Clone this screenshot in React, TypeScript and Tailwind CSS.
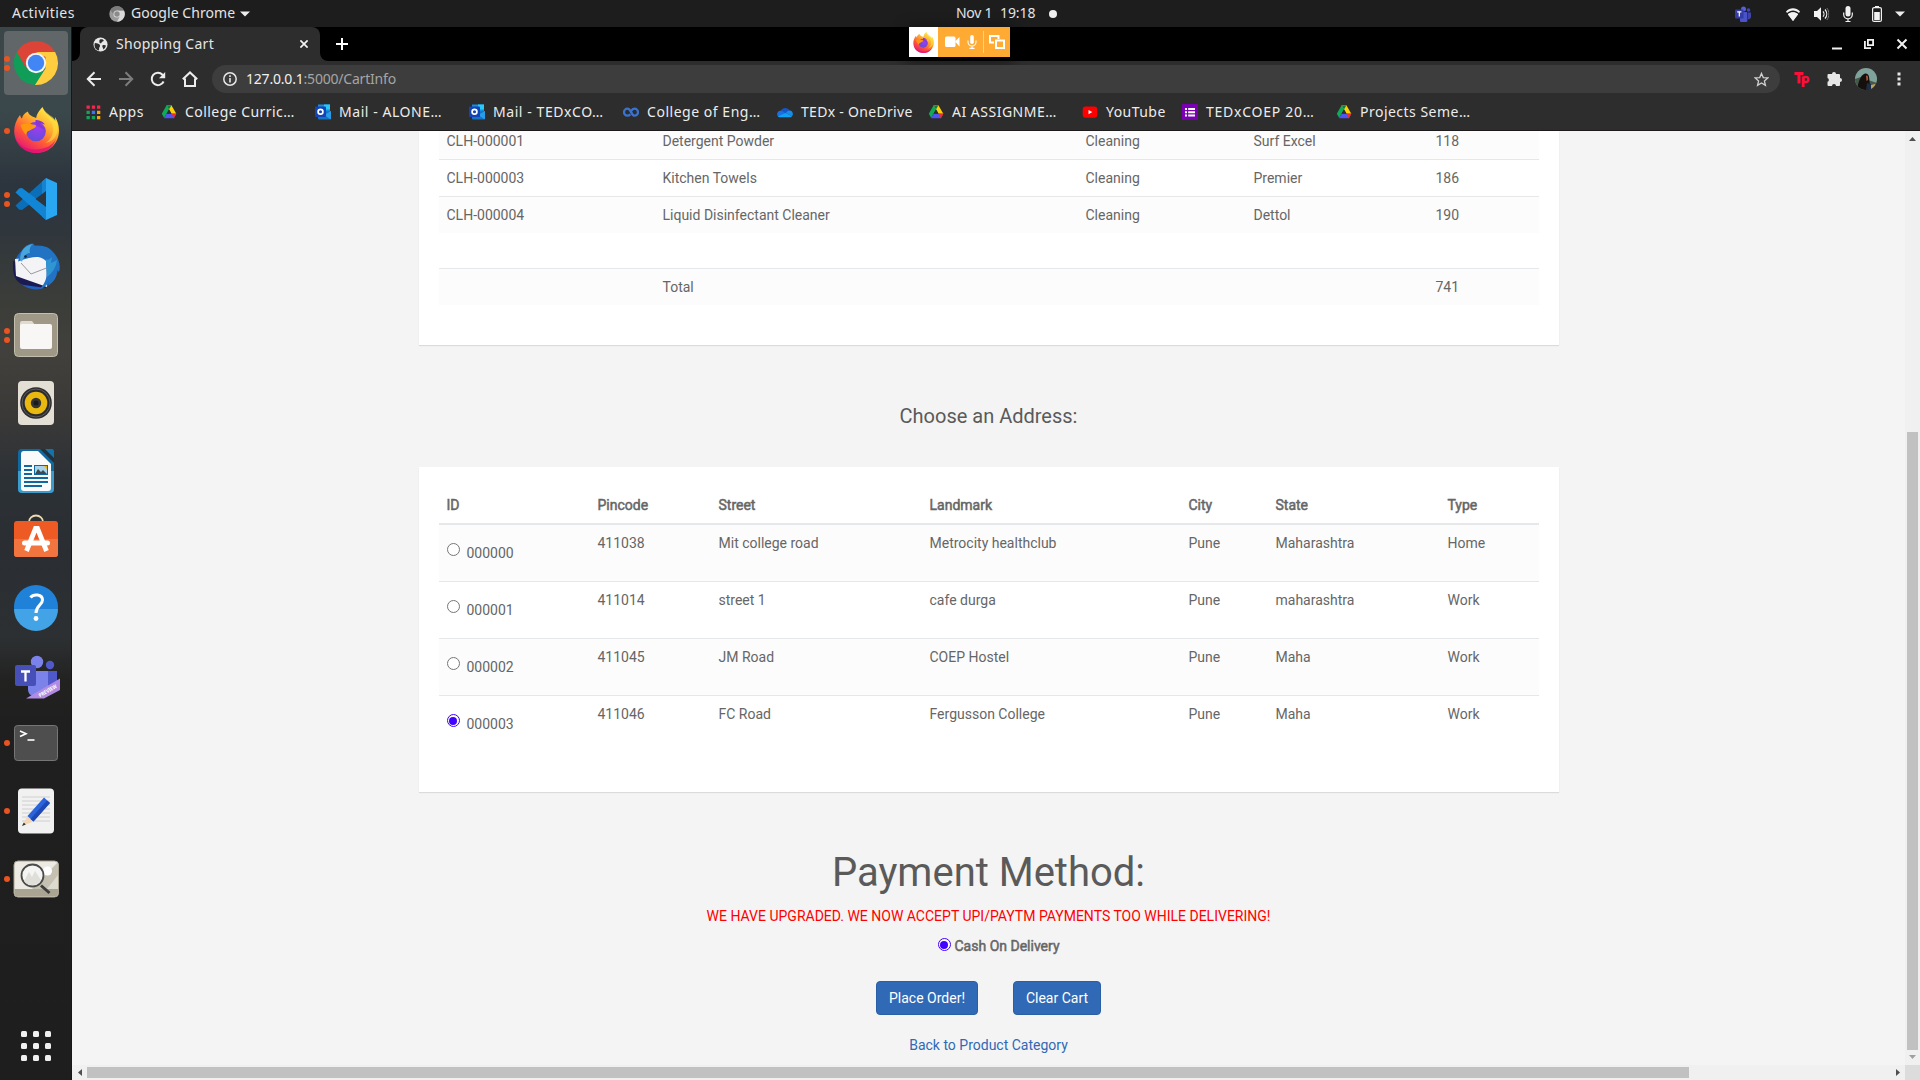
import React from "react";

type Kids = { children?: React.ReactNode };

/* ---------- small shared drawings ---------- */

function Firefox({ id, className }: { id: string; className: string }) {
  return (
    <svg viewBox="0 0 46 46" className={className}>
      <defs>
        <linearGradient id={id + "b"} x1="0.85" y1="0.05" x2="0.25" y2="1">
          <stop offset="0" stopColor="#fff44f" />
          <stop offset="0.35" stopColor="#ffb02e" />
          <stop offset="0.65" stopColor="#ff5a36" />
          <stop offset="1" stopColor="#e3127a" />
        </linearGradient>
        <radialGradient id={id + "p"} cx="0.6" cy="0.3" r="0.8">
          <stop offset="0" stopColor="#a03cf0" />
          <stop offset="1" stopColor="#5a4fd8" />
        </radialGradient>
      </defs>
      <path
        d="M29 0c-3 3-6 7-6.400 11C18 9 15 8 14.500 4.500 11 6 9 8.500 8.500 11.500 7.500 11 7 9.500 6.500 8 3 12.500.7 18 .7 24 .7 36.500 10.500 46 23 46s22.500-9.500 22.500-22.500c0-5-1.500-10-4-13.500l.3 4C37.500 9 31 7 29 0z"
        fill={`url(#${id}b)`}
      />
      <circle cx="22.500" cy="24.500" r="9.800" fill={`url(#${id}p)`} />
      <path d="M22 13c3 0 7 1 9.500 4.500-2-1-4-1-5-.5 3 2 5 4 5.500 8C30 20 24 21 22 17z" fill="#8a36d6" />
      <path d="M7 18c5-2 9-1 15 0 1 1 .5 2.500-2 3.500-3 1-3 2-5 2.500-1 .3-2 1-2.400 4C10 25 8 22 7 18z" fill="#ff980e" />
      <path d="M29 0c-2 7 8 10 10 18 2 9-2 15-7 18 10-2 13-10 12-18-1-4-3-6-5-8-4-3-8-5-10-10z" fill="#ffe13d" opacity=".6" />
      <path d="M1.500 29c3 9 11 13.500 20 13.500 10 0 18-4 21-11C40 41 32 46 23 46 12 46 4 39 1.500 29z" fill="#e20d78" opacity=".75" />
    </svg>
  );
}

function Drive() {
  return (
    <svg viewBox="0 0 16 16" className="size-4 shrink-0">
      <path d="M5.600 1.300h4.800L5.500 9.800 3.200 14 .8 9.800z" fill="#0fa958" />
      <path d="M5.600 1.300h4.800l4.900 8.500h-4.700z" fill="#ffcf0a" />
      <path d="M5.600 1.300L8 5.500l2.400-4.200z" fill="#0b8043" />
      <path d="M5.500 9.800h9.800l-2.400 4.400H3.100z" fill="#4f55f2" />
      <path d="M10.600 9.800h4.700l-2.400 4.400z" fill="#e8302c" />
      <path d="M5.700 9.500L8 5.500l2.300 4z" fill="#2d2d2d" />
    </svg>
  );
}

function Outlook() {
  return (
    <svg viewBox="0 0 16 16" className="size-4 shrink-0">
      <path d="M3 .5h12v9H3z" fill="#1490df" />
      <path d="M9 .5h6v5H9z" fill="#28c8f8" />
      <path d="M3 8l13-1v7.500a1 1 0 0 1-1 1H4a1 1 0 0 1-1-1z" fill="#1272c4" />
      <path d="M16 7v7.500a1 1 0 0 1-.5.800L9 11z" fill="#2a9be6" />
      <rect y="2.500" width="11" height="10.500" rx="1" fill="#1443b8" />
      <circle cx="5.500" cy="7.800" r="2.400" fill="none" stroke="#fff" strokeWidth="1.700" />
    </svg>
  );
}

function Coursera() {
  return (
    <svg viewBox="0 0 16 16" className="size-4 shrink-0">
      <path
        d="M7.300 10.200C6.500 11.300 5.600 11.700 4.500 11.700a3.500 3.500 0 0 1 0-7c3.600 0 3.800 7 7 7a3.500 3.500 0 0 0 0-7c-1.600 0-2.600 1-3.300 2.400"
        fill="none"
        stroke="#3a72cf"
        strokeWidth="2.300"
      />
    </svg>
  );
}

function OneDrive() {
  return (
    <svg viewBox="0 0 16 16" className="size-4 shrink-0">
      <path d="M3.500 8a5 5 0 0 1 9.300-1.500C11 8 9 9 6 10z" fill="#1556c4" />
      <path d="M3.300 6.800C1.500 7 .1 8.400.1 10.200c0 1.900 1.500 3 3.200 3L10 10 5.500 7.200c-.7-.4-1.500-.5-2.200-.4z" fill="#1b6fe0" />
      <path d="M12.700 6.500c1.900.2 3.200 1.600 3.200 3.400 0 1-.4 1.800-.9 2.400L8.800 9c1-1.600 2.400-2.600 3.900-2.500z" fill="#1a8be8" />
      <path d="M8.800 9l6.300 3.300c-.6.600-1.400.9-2.400.9H3.300c-1 0-1.900-.4-2.400-1z" fill="#0fa2f4" />
    </svg>
  );
}

function YouTube() {
  return (
    <svg viewBox="0 0 16 16" className="size-4 shrink-0">
      <rect x=".7" y="2.400" width="14.600" height="11.400" rx="3" fill="#f00" />
      <path d="M6.500 6v4.200L10.300 8.100z" fill="#fff" />
    </svg>
  );
}

function Forms() {
  return (
    <svg viewBox="0 0 16 16" className="size-4 shrink-0">
      <rect width="16" height="16" rx="1" fill="#7b00b4" />
      <path d="M3 4h2v2H3zM3 7.300h2v2H3zM3 10.600h2v2H3zM6.200 4H13v2H6.200zM6.200 7.300H13v2H6.200zM6.200 10.600H13v2H6.200z" fill="#fff" />
    </svg>
  );
}

function AppsGrid() {
  return (
    <svg viewBox="0 0 16 16" className="size-4 shrink-0">
      <path d="M1.500 1.500h3.300v3.300H1.500zM6.800 1.500h3.300v3.300H6.800zM12 1.500h3.300v3.300H12z" fill="#f5274f" />
      <path d="M1.500 6.700h3.300V10H1.500zM1.500 12h3.300v3.300H1.500zM6.800 12h3.300v3.300H6.800z" fill="#12a45c" />
      <path d="M6.800 6.700h3.300V10H6.800z" fill="#3f72f5" />
      <path d="M12 6.700h3.300V10H12zM12 12h3.300v3.300H12z" fill="#f4a60b" />
    </svg>
  );
}

/* ---------- desktop top bar ---------- */

function TopBar() {
  return (
    <header className="flex h-[27px] shrink-0 items-center bg-[#1d1d1d] text-[14px] text-[#e4e4e4]">
      <div className="flex w-[956px] items-center pl-3">
        <span className="w-[97px] pb-[2px] tracking-[0.450px]">Activities</span>
        <svg viewBox="0 0 16 16" className="mr-[6px] size-4">
          <circle cx="8" cy="8" r="7.700" fill="#9b9b9b" />
          <path d="M8 4.500h7a7.700 7.700 0 0 1-7 11.200l3.200-6z" fill="#d9d9d9" />
          <path d="M1.500 4A7.700 7.700 0 0 1 15 4.500H8L5 9.500z" fill="#7c7c7c" />
          <circle cx="8" cy="8" r="3.600" fill="#dedede" />
          <circle cx="8" cy="8" r="2.700" fill="#8b8b8b" />
        </svg>
        <span className="w-[109px] pb-[2px] tracking-[0.060px]">Google Chrome</span>
        <svg viewBox="0 0 10 6" className="h-[6px] w-[10px]">
          <path d="M0 .5h10L5 5.500z" fill="#eee" />
        </svg>
      </div>
      <div className="flex w-[779px] items-center">
        <span className="w-[44px] pb-[2px] tracking-[-0.300px]">Nov 1</span>
        <span className="w-[49px] pb-[2px] tracking-[-0.100px]">19:18</span>
        <span className="size-2 rounded-full bg-[#efefef]" />
      </div>
      <svg viewBox="0 0 16 16" className="mr-[34px] size-4">
        <circle cx="8.500" cy="3" r="2.500" fill="#5560d8" />
        <circle cx="13.500" cy="4" r="1.800" fill="#4049b8" />
        <path d="M5 6h7v6a3.500 3.500 0 0 1-7 3z" fill="#4b53c8" />
        <path d="M12.500 6.500H16V11a2.500 2.500 0 0 1-3.500 2z" fill="#3d45ad" />
        <rect y="3.500" width="8.500" height="9" rx="1" fill="#343ca6" />
        <path d="M2.200 5.800h4.200M4.300 5.800v4.700" stroke="#fff" strokeWidth="1.200" />
      </svg>
      <svg viewBox="0 0 16 16" className="mr-3 size-4">
        <path d="M8 15L2.900 8.200c3-2.600 7.200-2.600 10.200 0z" fill="#f2f2f2" />
        <path d="M2 7L1 5.500C5 1.300 11 1.300 15 5.500L14 7C10.500 3.600 5.500 3.600 2 7z" fill="#f2f2f2" />
        <path d="M2.900 8.200C5 6 11 6 13.100 8.200L8 15z" fill="#f2f2f2" />
      </svg>
      <svg viewBox="0 0 16 16" className="mr-[11px] size-4">
        <path d="M1 5h3l4-3.800v13.600L4 11H1z" fill="#f2f2f2" />
        <path d="M10 5.300c1.300 1.500 1.300 4 0 5.400M12 3.500c2.300 2.600 2.300 6.400 0 9" fill="none" stroke="#f2f2f2" strokeWidth="1.200" />
        <path d="M13.800 2c2.800 3.500 2.800 8.500 0 12" fill="none" stroke="#777" strokeWidth="1" />
      </svg>
      <svg viewBox="0 0 16 16" className="mr-[13px] size-4">
        <rect x="5.500" y="0" width="5" height="10.500" rx="2.500" fill="#f2f2f2" />
        <path d="M3.700 6.500v2a4.300 4.300 0 0 0 8.600 0v-2M8 12.500V16M5.500 15.500h5" fill="none" stroke="#f2f2f2" strokeWidth="1.200" />
      </svg>
      <svg viewBox="0 0 16 16" className="mr-[10px] size-4">
        <path d="M6 0h4v2H6z" fill="#f2f2f2" />
        <rect x="3.600" y="1.600" width="8.800" height="13.800" rx="1.500" fill="none" stroke="#f2f2f2" strokeWidth="1.200" />
        <rect x="5.200" y="6" width="5.600" height="8" fill="#f2f2f2" />
      </svg>
      <svg viewBox="0 0 10 6" className="h-[6px] w-[10px]">
        <path d="M0 .5h10L5 5.500z" fill="#eee" />
      </svg>
    </header>
  );
}

/* ---------- dock ---------- */

function DockItem({ dots = 0, active = false, children }: Kids & { dots?: number; active?: boolean }) {
  return (
    <div className="flex h-[68px] w-[72px] shrink-0 items-center justify-center">
      <div className={active ? "relative size-16 rounded-[4px] bg-[#616769]" : "relative size-16"}>
        {dots > 0 && (
          <div className="absolute inset-y-0 left-0 flex w-[6px] flex-col items-center justify-center gap-[3px]">
            {Array.from({ length: dots }, (_, i) => (
              <span key={i} className="size-[6px] rounded-full bg-[#e95420]" />
            ))}
          </div>
        )}
        <svg viewBox="0 0 64 64" className="block size-16">
          {children}
        </svg>
      </div>
    </div>
  );
}

function Dock() {
  return (
    <nav className="flex w-[72px] shrink-0 flex-col border-r border-[#161718] bg-[linear-gradient(180deg,#3a4648_0%,#3b484b_8%,#2c343d_15%,#2f363c_19%,#3b3d39_26%,#41403c_31%,#3c3a38_36%,#2c3136_43%,#2a2e33_50%,#2d3032_58%,#222221_62%,#1f1f1f_66%,#1e1e1e_100%)] pt-[2px]">
      <DockItem dots={2} active>
        <path d="M32 32L12.900 21A22 22 0 0 1 51.100 21z" fill="#db4437" />
        <path d="M12.900 21A22 22 0 0 0 32 54l9.500-16.500H32L22.500 37.500z" fill="#0f9d58" />
        <path d="M51.100 21A22 22 0 0 1 31 54l10.500-16.500V26L32 21z" fill="#ffcd40" />
        <path d="M12.900 21L22 37l5-10 5-6z" fill="#db4437" />
        <circle cx="32" cy="32" r="10.200" fill="#f4f4f4" />
        <circle cx="32" cy="32" r="8.200" fill="#4285f4" />
      </DockItem>
      <DockItem dots={1}>
        <svg x="9.500" y="8" width="46" height="46">
          <Firefox id="dock" className="size-[46px]" />
        </svg>
      </DockItem>
      <DockItem dots={2}>
        <path d="M42 11L11.500 38.500l3.500 4 3 .5L42 25z" fill="#0a6fb8" />
        <path d="M42 53L11.500 25.500l3.500-4 3-.5L42 39z" fill="#1286d6" />
        <path d="M42 11l11 5v32l-11 5z" fill="#2aa7f2" />
        <path d="M38 14.600L42 11v14l-4 3zM38 49.400L42 53V39l-4-3z" fill="#1583d0" />
        <path d="M42 24L31.500 32 42 40z" fill="#2e353c" />
      </DockItem>
      <DockItem>
        <circle cx="32" cy="32.500" r="22" fill="#2260bd" />
        <path d="M9 26C9 34 8 46 20 50l22 3-4-20z" fill="#1c1a52" />
        <path d="M11 24l31-3 1 31-31-11z" fill="#f4f4f6" />
        <path d="M17 28l10 11 18-7" fill="none" stroke="#9a9aa0" strokeWidth="1" />
        <path d="M14 27C16 14 22 9 29 8.500l2 2.500c9-1 14 1 18 6 6 6 8 14 6 20l-2-2c0 8-4 12-8 15l0-3c-3 4-6 6-9 7 8-9 8-18 6-28-5-5-12-5-17-3-4 1-7 2-11 3.500z" fill="#2273c4" />
        <path d="M16 24C17 14 22 10 29 9c-3 2-4 6-3 9-4 0-7 4-8 9z" fill="#48a6dc" />
        <path d="M42 24c2 2 4 0 6-2l-1 6 6-3c-1 8-5 13-10 17z" fill="#2f96d3" />
        <circle cx="21.500" cy="21.500" r="1.300" fill="#16233c" />
      </DockItem>
      <DockItem dots={2}>
        <rect x="10.500" y="10.500" width="43" height="43" rx="4" fill="#9f9886" stroke="#c4beae" />
        <path d="M16 20a2 2 0 0 1 2-2h10l3 4-15 10z" fill="#dfdbd2" />
        <path d="M16 23a2 2 0 0 1 2-2h9.500l3.500 0H46a2 2 0 0 1 2 2v21a2 2 0 0 1-2 2H18a2 2 0 0 1-2-2z" fill="#f8f7f6" />
      </DockItem>
      <DockItem>
        <rect x="14" y="10" width="36" height="44" rx="4" fill="#e4dfd5" />
        <circle cx="32" cy="32" r="15.800" fill="#2c2c2f" />
        <circle cx="32" cy="32" r="14" fill="none" stroke="#5d5d60" strokeWidth="1" />
        <circle cx="32" cy="32" r="11.300" fill="#eab90f" />
        <circle cx="32" cy="32" r="5.200" fill="#333" />
        <circle cx="32" cy="32" r="2.500" fill="#1a1a1a" />
      </DockItem>
      <DockItem>
        <rect x="14" y="10" width="36" height="44" rx="4" fill="#12699f" />
        <path d="M14 32h36v18a4 4 0 0 1-4 4H18a4 4 0 0 1-4-4z" fill="#3d9ccc" />
        <path d="M17 15a3 3 0 0 1 3-3h14l13 13v24a3 3 0 0 1-3 3H20a3 3 0 0 1-3-3z" fill="#fafafa" />
        <path d="M36 10l14 14V12a2 2 0 0 0-2-2z" fill="#20313d" />
        <path d="M41 10h7a2 2 0 0 1 2 2v7z" fill="#1273ad" />
        <path d="M20 27h8M20 31h8M20 35h8M20 39h24M20 43h24M20 47h18" stroke="#0f689f" strokeWidth="2" />
        <rect x="30.500" y="26.500" width="13" height="9" fill="#a8d3ea" stroke="#0f689f" />
        <path d="M31 35l3-5 3 3 2-2 4 4z" fill="#3f4a50" />
        <path d="M40 27h3v3z" fill="#f0b400" />
      </DockItem>
      <DockItem>
        <path d="M25 16v-1a7 6.500 0 0 1 14 0v1" fill="none" stroke="#ecdcae" strokeWidth="1.800" />
        <rect x="10" y="14" width="44" height="36" rx="3" fill="#ee5a24" />
        <path d="M10 32h44v15a3 3 0 0 1-3 3H13a3 3 0 0 1-3-3z" fill="#f2743f" />
        <path d="M22.500 44L31.500 21.500h2L42.500 44" fill="none" stroke="#fff" strokeWidth="4.800" />
        <rect x="18" y="33.500" width="28" height="5" rx="2.500" fill="#fff" />
      </DockItem>
      <DockItem>
        <circle cx="32" cy="32" r="22" fill="#1f82d8" />
        <path d="M10 34a22 22 0 0 0 44 0z" fill="#42a4e6" />
        <path d="M26.500 22.500c3-4 12-3.500 12 2.500 0 5-6.500 5.500-6.500 13" fill="none" stroke="#fff" strokeWidth="3" />
        <circle cx="32" cy="43.500" r="2.400" fill="#fff" />
      </DockItem>
      <DockItem>
        <circle cx="33" cy="19" r="6.200" fill="#7b83eb" />
        <circle cx="46" cy="22" r="4.200" fill="#5059c9" />
        <path d="M39 28h14v14c0 6-7 9-12 7z" fill="#5059c9" />
        <path d="M24 28h20v16c0 6-6 11-12 10s-8-4-8-8z" fill="#7b83eb" />
        <rect x="11" y="22" width="21" height="21" rx="2" fill="#4650b8" />
        <path d="M17 28.500h9M21.500 28.500v10" stroke="#fff" strokeWidth="2.300" />
        <path d="M22 55.500L56 35.500V47L40 55.500z" fill="#b18be3" />
        <text x="36" y="54.500" textLength="20" lengthAdjust="spacingAndGlyphs" transform="rotate(-30 36 54.500)" className="fill-white text-[5.500px] font-bold">
          PREVIEW
        </text>
      </DockItem>
      <DockItem dots={1}>
        <rect x="10.500" y="14.500" width="43" height="35" rx="3" fill="#4e4e4e" stroke="#767676" />
        <path d="M16 20l6 2.700-6 2.700" fill="none" stroke="#fff" strokeWidth="1.600" />
        <path d="M23.500 29h7" stroke="#fff" strokeWidth="1.600" />
      </DockItem>
      <DockItem dots={1}>
        <rect x="14" y="9.500" width="36" height="45" rx="4" fill="#f1f1f1" />
        <path d="M18 18h28M18 22h28M18 26h28M18 30h28M18 34h28M18 38h28M18 42h28" stroke="#cfcfcf" strokeWidth="1" />
        <path d="M18 47l5.500-10 6 5.500z" fill="#f3d7b5" />
        <path d="M18 47l1.800-3.500 2 2z" fill="#333" />
        <path d="M23.500 37L40 18.500l6 5.500L29.500 42.500z" fill="#2b63dc" />
        <path d="M26.500 40L43 21.500l3 2.500-16.500 18.500z" fill="#1e49b4" />
      </DockItem>
      <DockItem dots={1}>
        <rect x="10" y="14" width="44.500" height="36" rx="4" fill="#eceae2" stroke="#a7a390" />
        <path d="M54 15v27H28z" fill="#c5c1b2" />
        <path d="M54 28v14H43z" fill="#dddace" />
        <path d="M10.500 42h43.500v4a3.500 3.500 0 0 1-3.500 3.500H14a3.500 3.500 0 0 1-3.500-3.500z" fill="#aaa593" />
        <circle cx="43.500" cy="24" r="4.500" fill="#fff" />
        <circle cx="28.500" cy="28.500" r="11" fill="#f4f4f2" stroke="#4b4b4b" strokeWidth="1.800" />
        <path d="M20 34l5-9 3 5 3-6 6 9c-3 6-13 7-17 1z" fill="#dfded9" />
        <path d="M37 38.500l8.500 7.500" stroke="#3d3d3d" strokeWidth="3" />
      </DockItem>
      <div className="mx-auto mt-auto mb-[19px] grid grid-cols-3 gap-[6px]">
        {Array.from({ length: 9 }, (_, i) => (
          <span key={i} className="size-[6px] rounded-[1.500px] bg-[#f0f0f0]" />
        ))}
      </div>
    </nav>
  );
}

/* ---------- browser chrome ---------- */

function TabStrip() {
  return (
    <div className="flex h-[34px] shrink-0 items-start bg-black">
      <div className="h-[34px] w-2 bg-[#2d2d2d]">
        <div className="h-full w-2 rounded-br-[8px] bg-black" />
      </div>
      <div className="flex h-[34px] w-[240px] items-center rounded-t-[8px] bg-[#2d2d2d] pl-[13px] text-[14px] text-[#e6e6e6]">
        <svg viewBox="0 0 16 16" className="mr-[8px] size-[15px]">
          <circle cx="8" cy="8" r="7.500" fill="#e8e8e8" />
          <path d="M2 6.500C5 7 7 7 7.500 9c.3 1.500-1 1.500-1 3 0 1 .3 1.700-.5 2.500C2 13.500 1 9.500 2 6.500zM8 2.500c2-.5 3 .3 3.500 1.200C11 5 9.500 4.500 9 6c-.5 1.200-2.200.6-2.200-.7C6.800 4.200 6.500 3 8 2.500zM10 9c1.500-1 3-.5 3.800 0-.3 2-1.500 3.500-2.800 4.200C11 11.500 9.500 10.500 10 9z" fill="#2d2d2d" />
        </svg>
        <span className="w-[184px] pb-[2px] tracking-[0.300px]">Shopping Cart</span>
        <svg viewBox="0 0 8 8" className="size-2">
          <path d="M.4.4l7.200 7.200M7.600.4L.4 7.600" stroke="#f2f2f2" strokeWidth="1.700" />
        </svg>
      </div>
      <div className="h-[34px] w-2 bg-[#2d2d2d]">
        <div className="h-full w-2 rounded-bl-[8px] bg-black" />
      </div>
      <svg viewBox="0 0 12 12" className="mt-[11px] ml-2 size-3">
        <path d="M6 0v12M0 6h12" stroke="#fff" strokeWidth="2" />
      </svg>
      <div className="ml-[561px] flex h-[30px] w-[101px] shadow-[0_4px_14px_4px_rgba(0,0,0,0.35)]">
        <div className="flex w-[29px] items-center justify-center bg-white">
          <Firefox id="share" className="size-[21px]" />
        </div>
        <div className="flex flex-1 items-center bg-[#ffaa33] pl-[7px]">
          <svg viewBox="0 0 15 12" className="h-3 w-[15px]">
            <rect y=".5" width="10.500" height="10.500" rx="1.500" fill="#fff" />
            <path d="M10 5.500L14.500 1v9.500z" fill="#fff" />
          </svg>
          <svg viewBox="0 0 10 14" className="ml-[7px] h-[14px] w-[10px]">
            <rect x="3.200" width="3.600" height="9" rx="1.800" fill="#fff" />
            <path d="M1 5.500v1.500a4 4 0 0 0 8 0V5.500M5 11v2.500M2.500 13.400h5" fill="none" stroke="#fff" strokeWidth="1.100" />
          </svg>
          <div className="mr-[5px] ml-[6px] h-[22px] w-px bg-[#ffd08c]" />
          <svg viewBox="0 0 16 14" className="h-[14px] w-4">
            <path d="M5 7.500H1V1h8.500v3" fill="none" stroke="#fff" strokeWidth="2" />
            <path d="M7 5.500h8V13H7z" fill="none" stroke="#fff" strokeWidth="2" />
          </svg>
        </div>
      </div>
      <div className="mt-[11px] mr-3 ml-auto flex items-center">
        <svg viewBox="0 0 12 12" className="mr-5 size-3">
          <path d="M1 9.500h10v2H1z" fill="#f0f0f0" />
        </svg>
        <svg viewBox="0 0 12 12" className="mr-[21px] size-3">
          <path d="M4.900 1.900h5.200v5.200H4.900zM1.900 3v7.100H8" fill="none" stroke="#f0f0f0" strokeWidth="1.800" />
        </svg>
        <svg viewBox="0 0 12 12" className="size-3">
          <path d="M1.500 1.500l9 9M10.500 1.500l-9 9" stroke="#f0f0f0" strokeWidth="2" />
        </svg>
      </div>
    </div>
  );
}

function Toolbar() {
  return (
    <div className="flex h-[36px] shrink-0 items-center pl-[14px]">
      <svg viewBox="0 0 16 16" className="mr-4 size-4" fill="none" stroke="#ececec" strokeWidth="2">
        <path d="M15 8H2M8.500 1.300L1.800 8l6.700 6.700" />
      </svg>
      <svg viewBox="0 0 16 16" className="mr-4 size-4" fill="none" stroke="#7d7d7d" strokeWidth="2">
        <path d="M1 8h13M7.500 1.300L14.200 8l-6.700 6.700" />
      </svg>
      <svg viewBox="0 0 16 16" className="mr-4 size-4" fill="none" stroke="#ececec" strokeWidth="2">
        <path d="M13.600 10.500A6.200 6.200 0 1 1 12.500 3.700L14 5.200" />
        <path d="M15.200 1v6.300H9z" fill="#ececec" stroke="none" />
      </svg>
      <svg viewBox="0 0 16 16" className="mr-[14px] size-4" fill="none" stroke="#ececec" strokeWidth="2">
        <path d="M.8 8.300L8 1.500l7.200 6.800M3 7.500V15h10V7.500" />
      </svg>
      <div className="flex h-7 w-[1568px] items-center rounded-full bg-[#3d3d3d] pr-[11px] pl-[11px] text-[14px]">
        <svg viewBox="0 0 14 14" className="mr-[9px] size-[14px]">
          <circle cx="7" cy="7" r="6.200" fill="none" stroke="#e6e6e6" strokeWidth="1.500" />
          <path d="M6.200 6h1.600v4.500H6.200zM6.200 3.300h1.600v1.600H6.200z" fill="#e6e6e6" />
        </svg>
        <span className="pb-[2px] tracking-[-0.200px] text-[#f0f0f0]">127.0.0.1</span>
        <span className="pb-[2px] tracking-[-0.200px] text-[#a5a5a5]">:5000/CartInfo</span>
        <svg viewBox="0 0 16 16" className="ml-auto size-[15px]" fill="none" stroke="#d0d0d0" strokeWidth="1.400">
          <path d="M8 1.500l1.900 4.400 4.800.4-3.600 3.200 1.100 4.700L8 11.700l-4.200 2.500 1.100-4.700L1.300 6.300l4.800-.4z" />
        </svg>
      </div>
      <svg viewBox="0 0 16 16" className="mr-4 ml-[14px] size-4" fill="none" stroke="#ff0f38">
        <path d="M.5 2.500h9M5 2v10.500" strokeWidth="3" />
        <path d="M9.200 5.500V16" strokeWidth="2.800" />
        <circle cx="11.800" cy="8.500" r="2.600" strokeWidth="2.400" />
      </svg>
      <svg viewBox="0 0 16 16" className="mr-[13px] size-4">
        <path d="M6 3a2 2 0 0 1 4 0h3a1 1 0 0 1 1 1v3a2 2 0 0 1 0 4v3a1 1 0 0 1-1 1h-3a2 2 0 0 0-4 0H2.500a1 1 0 0 1-1-1v-3.200a2 2 0 0 0 0-3.800V4a1 1 0 0 1 1-1z" fill="#e6e6e6" />
      </svg>
      <svg viewBox="0 0 22 22" className="mr-[20px] size-[22px]">
        <defs>
          <clipPath id="avatar">
            <circle cx="11" cy="11" r="11" />
          </clipPath>
        </defs>
        <g clipPath="url(#avatar)">
          <rect width="22" height="22" fill="#7fa39a" />
          <path d="M0 11l6-2 10 4 6 2v7H0z" fill="#45594a" />
          <path d="M2 22C3 16 5 7 10 5.500c4-.6 4.500 4 4.500 8l1.500 8.500z" fill="#14100e" />
          <path d="M11 8c1.500-1.500 2.500 1 2 4l-1.500 1z" fill="#a3583c" />
          <path d="M12 15l4 1 1 6h-6z" fill="#1c2c44" />
          <path d="M16 17l4-1v6h-4z" fill="#c0a35a" />
        </g>
      </svg>
      <svg viewBox="0 0 4 14" className="h-[14px] w-1">
        <path d="M.5.5h3v3h-3zM.5 5.500h3v3h-3zM.5 10.500h3v3h-3z" fill="#e6e6e6" />
      </svg>
    </div>
  );
}

function Bookmark({ icon, label, className }: { icon: React.ReactNode; label: string; className: string }) {
  return (
    <div className={"flex shrink-0 items-center gap-2 whitespace-nowrap " + className}>
      {icon}
      <span className="pb-[2px]">{label}</span>
    </div>
  );
}

function Bookmarks() {
  return (
    <div className="flex h-[34px] shrink-0 items-center border-b border-[#1c1a1b] pt-[1px] pb-[4px] pl-[13px] text-[14px] text-[#ececec]">
      <Bookmark icon={<AppsGrid />} label="Apps" className="w-[76px] tracking-[0.500px]" />
      <Bookmark icon={<Drive />} label="College Curric…" className="w-[154px] tracking-[0.450px]" />
      <Bookmark icon={<Outlook />} label="Mail - ALONE…" className="w-[154px] tracking-[0.550px]" />
      <Bookmark icon={<Outlook />} label="Mail - TEDxCO…" className="w-[154px] tracking-[0.570px]" />
      <Bookmark icon={<Coursera />} label="College of Eng…" className="w-[154px] tracking-[0.530px]" />
      <Bookmark icon={<OneDrive />} label="TEDx - OneDrive" className="w-[151px] tracking-[0.300px]" />
      <Bookmark icon={<Drive />} label="AI ASSIGNME…" className="w-[154px] tracking-[0.500px]" />
      <Bookmark icon={<YouTube />} label="YouTube" className="w-[100px] tracking-[0.450px]" />
      <Bookmark icon={<Forms />} label="TEDxCOEP 20…" className="w-[154px] tracking-[0.750px]" />
      <Bookmark icon={<Drive />} label="Projects Seme…" className="w-[154px] tracking-[0.480px]" />
    </div>
  );
}

/* ---------- page ---------- */

const items = [
  ["CLH-000001", "Detergent Powder", "Cleaning", "Surf Excel", "118"],
  ["CLH-000003", "Kitchen Towels", "Cleaning", "Premier", "186"],
  ["CLH-000004", "Liquid Disinfectant Cleaner", "Cleaning", "Dettol", "190"],
];

const addresses = [
  ["000000", "411038", "Mit college road", "Metrocity healthclub", "Pune", "Maharashtra", "Home"],
  ["000001", "411014", "street 1", "cafe durga", "Pune", "maharashtra", "Work"],
  ["000002", "411045", "JM Road", "COEP Hostel", "Pune", "Maha", "Work"],
  ["000003", "411046", "FC Road", "Fergusson College", "Pune", "Maha", "Work"],
];

const itemCols = "grid grid-cols-[216px_423px_168px_182px_1fr] border-t border-[#e5e7e8] *:p-2";
const addressCols = "grid grid-cols-[151px_121px_211px_259px_87px_172px_1fr] *:px-2";

function Radio({ checked }: { checked: boolean }) {
  return checked ? (
    <span className="flex size-[13px] shrink-0 items-center justify-center rounded-full border border-[#4100ff] bg-white">
      <span className="size-[8px] rounded-full bg-[#4100ff]" />
    </span>
  ) : (
    <span className="size-[13px] shrink-0 rounded-full border border-[#767676] bg-white" />
  );
}

function Page() {
  return (
    <main className="flex h-full w-[1833px] flex-col items-center overflow-hidden bg-[#f4f4f4] font-[Roboto,sans-serif] text-[14px] leading-5 text-[#666]">
      <section className="h-[214px] w-[1140px] shrink-0 bg-white px-5 shadow-[0_1px_1px_rgba(0,0,0,0.1)]">
        {items.map((row, i) => (
          <div key={row[0]} className={itemCols + (i % 2 === 0 ? " bg-[#fcfcfc]" : "") + (i === 0 ? " -mt-[9px]" : "")}>
            {row.map((cell, j) => (
              <span key={j}>{cell}</span>
            ))}
          </div>
        ))}
        <div className="h-[35px]" />
        <div className={itemCols + " bg-[#fcfcfc]"}>
          <span />
          <span>Total</span>
          <span />
          <span />
          <span>741</span>
        </div>
      </section>

      <h4 className="mt-[59px] h-[24px] text-[20px] leading-6 text-[#5a5a5a]">Choose an Address:</h4>

      <section className="mt-[39px] h-[325px] w-[1140px] shrink-0 bg-white px-5 pt-5 shadow-[0_1px_1px_rgba(0,0,0,0.1)]">
        <div className={addressCols + " border-b-2 border-[#e5e7e8] pt-2 pb-2 [-webkit-text-stroke:0.500px_#666]"}>
          <span>ID</span>
          <span>Pincode</span>
          <span>Street</span>
          <span>Landmark</span>
          <span>City</span>
          <span>State</span>
          <span>Type</span>
        </div>
        {addresses.map((row, i) => (
          <div
            key={row[0]}
            className={
              addressCols +
              " h-[57px] pt-2" +
              (i % 2 === 0 ? " bg-[#fcfcfc]" : "") +
              (i < 3 ? " border-b border-[#e5e7e8]" : "")
            }
          >
            <span className="flex items-start gap-[7px] pt-[10px]">
              <Radio checked={i === 3} />
              <span>{row[0]}</span>
            </span>
            {row.slice(1).map((cell, j) => (
              <span key={j}>{cell}</span>
            ))}
          </div>
        ))}
      </section>

      <h1 className="mt-[58px] text-[40px] leading-[46px] text-[#5a5a5a]">Payment Method:</h1>
      <p className="mt-[10px] text-[#f00]">WE HAVE UPGRADED. WE NOW ACCEPT UPI/PAYTM PAYMENTS TOO WHILE DELIVERING!</p>
      <label className="mt-[10px] ml-[20px] flex items-start gap-[4px] [-webkit-text-stroke:0.500px_#666]">
        <span className="pt-[2px]">
          <Radio checked />
        </span>
        <span>Cash On Delivery</span>
      </label>
      <div className="mt-[25px] flex gap-[35px] text-white">
        <button className="h-[34px] w-[102px] rounded-[4px] border border-[#2b5fa4] bg-[#3069b5]">Place Order!</button>
        <button className="h-[34px] w-[88px] rounded-[4px] border border-[#2b5fa4] bg-[#3069b5]">Clear Cart</button>
      </div>
      <a className="mt-[20px] text-[#3069b5]">Back to Product Category</a>
    </main>
  );
}

function VerticalScroll() {
  return (
    <div className="flex w-[15px] shrink-0 flex-col items-center bg-[#f0f0f0]">
      <svg viewBox="0 0 7 4" className="mt-[6px] h-1 w-[7px]">
        <path d="M0 4L3.500 0 7 4z" fill="#505050" />
      </svg>
      <div className="mt-[291px] h-[618px] w-[11px] bg-[#c1c1c1]" />
      <svg viewBox="0 0 7 4" className="mt-[5px] h-1 w-[7px]">
        <path d="M0 0h7L3.500 4z" fill="#a0a0a0" />
      </svg>
    </div>
  );
}

function HorizontalScroll() {
  return (
    <div className="flex h-[15px] shrink-0 items-center bg-[#f0f0f0]">
      <svg viewBox="0 0 4 7" className="ml-[6px] h-[7px] w-1">
        <path d="M4 0v7L0 3.500z" fill="#505050" />
      </svg>
      <div className="ml-[5px] h-[11px] w-[1602px] bg-[#c1c1c1]" />
      <svg viewBox="0 0 4 7" className="ml-auto h-[7px] w-1">
        <path d="M0 0v7L4 3.500z" fill="#505050" />
      </svg>
      <div className="ml-[5px] h-[15px] w-[15px] bg-[#dcdcdc]" />
    </div>
  );
}

export default function App() {
  return (
    <div className="flex h-[1080px] w-[1920px] flex-col overflow-hidden font-['Noto_Sans',sans-serif]">
      <TopBar />
      <div className="flex min-h-0 flex-1">
        <Dock />
        <div className="flex w-[1848px] flex-col bg-[#2d2d2d]">
          <TabStrip />
          <Toolbar />
          <Bookmarks />
          <div className="flex h-[934px]">
            <Page />
            <VerticalScroll />
          </div>
          <HorizontalScroll />
        </div>
      </div>
    </div>
  );
}
